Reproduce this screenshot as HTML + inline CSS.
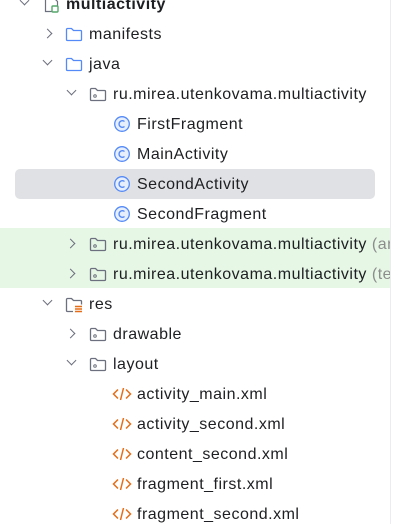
<!DOCTYPE html>
<html><head><meta charset="utf-8"><style>
body{margin:0;width:402px;height:524px;background:#fff;overflow:hidden;position:relative;font-family:"Liberation Sans",sans-serif;font-size:16px;letter-spacing:0.5px;color:#1e1f22}
.r{position:absolute;left:0;height:30px;line-height:31px;white-space:nowrap}
.t{position:absolute;top:0}
.ch{position:absolute;top:10px;width:6px;height:6px;border-right:1.5px solid #6c707e;border-bottom:1.5px solid #6c707e}
.dn{transform:rotate(45deg);top:8px}
.rt{transform:rotate(-45deg);top:11px}
svg{position:absolute;top:7px}
.g{color:#8c8c8c}
</style></head><body>
<div style="position:absolute;left:0;top:228px;width:390px;height:60px;background:#e6f7e6"></div>
<div style="position:absolute;left:15px;top:169px;width:360px;height:30px;background:#dfe1e5;border-radius:5px"></div>
<div style="position:absolute;left:390px;top:0;width:1px;height:524px;background:#ebecf0"></div>

<div class="r" style="top:-11px"><span class="ch dn" style="left:21px"></span>
<svg style="left:43px" width="18" height="18"><path d="M2.5 1.5h8l4 4v10h-12z" fill="none" stroke="#6c707e" stroke-width="1.2"/><rect x="9" y="10" width="6" height="6" rx="1" fill="#fff" stroke="#55a76a" stroke-width="1.4"/></svg>
<span class="t" style="left:66px;font-weight:bold">multiactivity</span></div>

<div class="r" style="top:19px"><span class="ch rt" style="left:44px"></span>
<svg style="left:65px" width="18" height="16"><path d="M1.5 3.5a1 1 0 0 1 1-1h4l2 2h7a1 1 0 0 1 1 1v8a1 1 0 0 1-1 1h-13a1 1 0 0 1-1-1z" fill="none" stroke="#548af7" stroke-width="1.3"/></svg>
<span class="t" style="left:89px">manifests</span></div>

<div class="r" style="top:49px"><span class="ch dn" style="left:44px"></span>
<svg style="left:65px" width="18" height="16"><path d="M1.5 3.5a1 1 0 0 1 1-1h4l2 2h7a1 1 0 0 1 1 1v8a1 1 0 0 1-1 1h-13a1 1 0 0 1-1-1z" fill="none" stroke="#548af7" stroke-width="1.3"/></svg>
<span class="t" style="left:89px">java</span></div>

<div class="r" style="top:79px"><span class="ch dn" style="left:68px"></span>
<svg style="left:89px" width="18" height="16"><path d="M1.5 3.5a1 1 0 0 1 1-1h4l2 2h7a1 1 0 0 1 1 1v8a1 1 0 0 1-1 1h-13a1 1 0 0 1-1-1z" fill="none" stroke="#6c707e" stroke-width="1.3"/><circle cx="6" cy="10" r="1.3" fill="none" stroke="#6c707e"/></svg>
<span class="t" style="left:113px">ru.mirea.utenkovama.multiactivity</span></div>

<div class="r" style="top:109px"><svg style="left:113px;top:6px" width="18" height="18"><circle cx="9" cy="9" r="7.3" fill="#e7effd" stroke="#548af7" stroke-width="1.3"/><path d="M11.5 6.5a3.3 3.3 0 1 0 0 5" fill="none" stroke="#548af7" stroke-width="1.4"/></svg><span class="t" style="left:137px">FirstFragment</span></div>
<div class="r" style="top:139px"><svg style="left:113px;top:6px" width="18" height="18"><circle cx="9" cy="9" r="7.3" fill="#e7effd" stroke="#548af7" stroke-width="1.3"/><path d="M11.5 6.5a3.3 3.3 0 1 0 0 5" fill="none" stroke="#548af7" stroke-width="1.4"/></svg><span class="t" style="left:137px">MainActivity</span></div>
<div class="r" style="top:169px"><svg style="left:113px;top:6px" width="18" height="18"><circle cx="9" cy="9" r="7.3" fill="#e7effd" stroke="#548af7" stroke-width="1.3"/><path d="M11.5 6.5a3.3 3.3 0 1 0 0 5" fill="none" stroke="#548af7" stroke-width="1.4"/></svg><span class="t" style="left:137px">SecondActivity</span></div>
<div class="r" style="top:199px"><svg style="left:113px;top:6px" width="18" height="18"><circle cx="9" cy="9" r="7.3" fill="#e7effd" stroke="#548af7" stroke-width="1.3"/><path d="M11.5 6.5a3.3 3.3 0 1 0 0 5" fill="none" stroke="#548af7" stroke-width="1.4"/></svg><span class="t" style="left:137px">SecondFragment</span></div>

<div class="r" style="top:229px;width:390px;overflow:hidden"><span class="ch rt" style="left:67px"></span>
<svg style="left:89px" width="18" height="16"><path d="M1.5 3.5a1 1 0 0 1 1-1h4l2 2h7a1 1 0 0 1 1 1v8a1 1 0 0 1-1 1h-13a1 1 0 0 1-1-1z" fill="none" stroke="#6c707e" stroke-width="1.3"/><circle cx="6" cy="10" r="1.3" fill="none" stroke="#6c707e"/></svg>
<span class="t" style="left:113px">ru.mirea.utenkovama.multiactivity <span class="g">(androidTest)</span></span></div>
<div class="r" style="top:259px;width:390px;overflow:hidden"><span class="ch rt" style="left:67px"></span>
<svg style="left:89px" width="18" height="16"><path d="M1.5 3.5a1 1 0 0 1 1-1h4l2 2h7a1 1 0 0 1 1 1v8a1 1 0 0 1-1 1h-13a1 1 0 0 1-1-1z" fill="none" stroke="#6c707e" stroke-width="1.3"/><circle cx="6" cy="10" r="1.3" fill="none" stroke="#6c707e"/></svg>
<span class="t" style="left:113px">ru.mirea.utenkovama.multiactivity <span class="g">(test)</span></span></div>

<div class="r" style="top:289px"><span class="ch dn" style="left:44px"></span>
<svg style="left:65px" width="18" height="18"><path d="M8 15.5h-5.5a1 1 0 0 1-1-1v-11a1 1 0 0 1 1-1h4l2 2h7a1 1 0 0 1 1 1v3" fill="none" stroke="#6c707e" stroke-width="1.3"/><path d="M10 10.5h7M10 13h7M10 15.5h7" stroke="#e66d17" stroke-width="1.4"/></svg>
<span class="t" style="left:89px">res</span></div>

<div class="r" style="top:319px"><span class="ch rt" style="left:67px"></span>
<svg style="left:89px" width="18" height="16"><path d="M1.5 3.5a1 1 0 0 1 1-1h4l2 2h7a1 1 0 0 1 1 1v8a1 1 0 0 1-1 1h-13a1 1 0 0 1-1-1z" fill="none" stroke="#6c707e" stroke-width="1.3"/><circle cx="6" cy="10" r="1.3" fill="none" stroke="#6c707e"/></svg>
<span class="t" style="left:113px">drawable</span></div>
<div class="r" style="top:349px"><span class="ch dn" style="left:68px"></span>
<svg style="left:89px" width="18" height="16"><path d="M1.5 3.5a1 1 0 0 1 1-1h4l2 2h7a1 1 0 0 1 1 1v8a1 1 0 0 1-1 1h-13a1 1 0 0 1-1-1z" fill="none" stroke="#6c707e" stroke-width="1.3"/><circle cx="6" cy="10" r="1.3" fill="none" stroke="#6c707e"/></svg>
<span class="t" style="left:113px">layout</span></div>

<div class="r" style="top:379px"><svg style="left:112px;top:7px" width="20" height="16"><path d="M6 3.5l-4.5 4.5 4.5 4.5M14 3.5l4.5 4.5-4.5 4.5M11.5 2l-3 12" fill="none" stroke="#e66d17" stroke-width="1.5"/></svg><span class="t" style="left:137px">activity_main.xml</span></div>
<div class="r" style="top:409px"><svg style="left:112px;top:7px" width="20" height="16"><path d="M6 3.5l-4.5 4.5 4.5 4.5M14 3.5l4.5 4.5-4.5 4.5M11.5 2l-3 12" fill="none" stroke="#e66d17" stroke-width="1.5"/></svg><span class="t" style="left:137px">activity_second.xml</span></div>
<div class="r" style="top:439px"><svg style="left:112px;top:7px" width="20" height="16"><path d="M6 3.5l-4.5 4.5 4.5 4.5M14 3.5l4.5 4.5-4.5 4.5M11.5 2l-3 12" fill="none" stroke="#e66d17" stroke-width="1.5"/></svg><span class="t" style="left:137px">content_second.xml</span></div>
<div class="r" style="top:469px"><svg style="left:112px;top:7px" width="20" height="16"><path d="M6 3.5l-4.5 4.5 4.5 4.5M14 3.5l4.5 4.5-4.5 4.5M11.5 2l-3 12" fill="none" stroke="#e66d17" stroke-width="1.5"/></svg><span class="t" style="left:137px">fragment_first.xml</span></div>
<div class="r" style="top:499px"><svg style="left:112px;top:7px" width="20" height="16"><path d="M6 3.5l-4.5 4.5 4.5 4.5M14 3.5l4.5 4.5-4.5 4.5M11.5 2l-3 12" fill="none" stroke="#e66d17" stroke-width="1.5"/></svg><span class="t" style="left:137px">fragment_second.xml</span></div>
</body></html>
